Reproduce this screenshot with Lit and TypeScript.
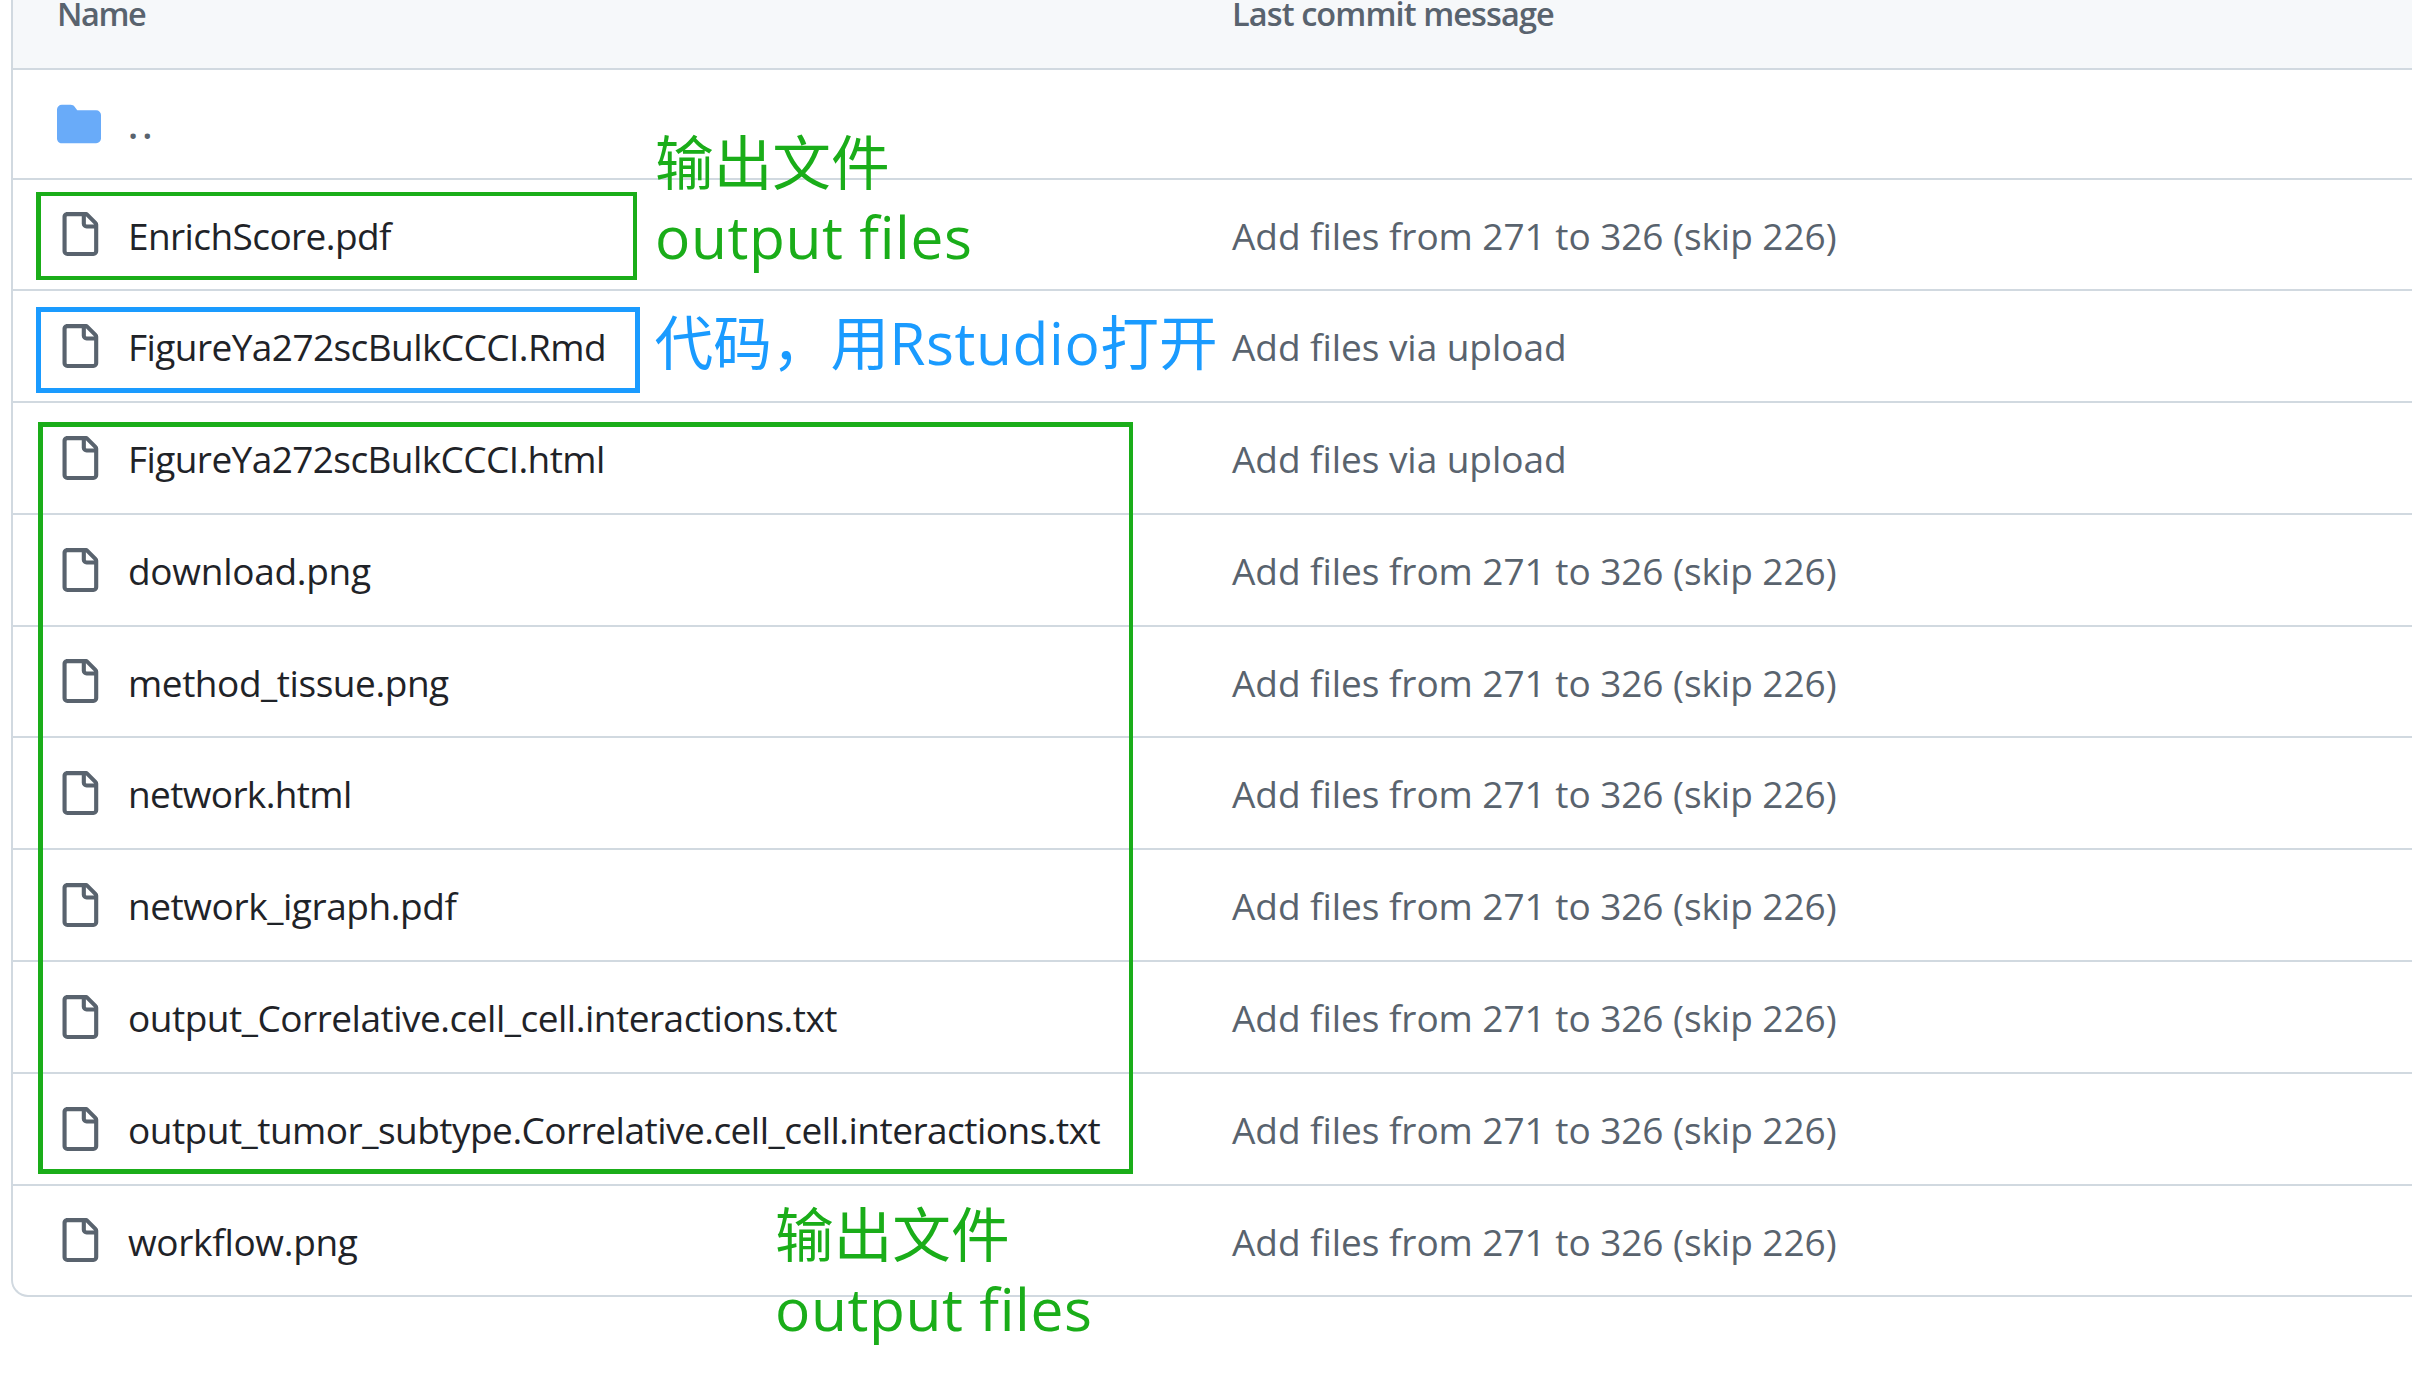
import { LitElement, html, css, svg } from "lit";
import { customElement } from "lit/decorators.js";
import { styleMap } from "lit/directives/style-map.js";

interface Entry {
  name: string;
  message: string;
  height: number;
  tracking: number;
}

const RANGE = "Add files from 271 to 326 (skip 226)";
const UPLOAD = "Add files via upload";

const ENTRIES: Entry[] = [
  { name: "EnrichScore.pdf", message: RANGE, height: 111, tracking: -0.59 },
  { name: "FigureYa272scBulkCCCI.Rmd", message: UPLOAD, height: 112, tracking: -0.57 },
  { name: "FigureYa272scBulkCCCI.html", message: UPLOAD, height: 112, tracking: -0.59 },
  { name: "download.png", message: RANGE, height: 112, tracking: -0.28 },
  { name: "method_tissue.png", message: RANGE, height: 111, tracking: -0.45 },
  { name: "network.html", message: RANGE, height: 112, tracking: -0.64 },
  { name: "network_igraph.pdf", message: RANGE, height: 112, tracking: -0.43 },
  { name: "output_Correlative.cell_cell.interactions.txt", message: RANGE, height: 112, tracking: -0.49 },
  { name: "output_tumor_subtype.Correlative.cell_cell.interactions.txt", message: RANGE, height: 112, tracking: -0.515 },
  { name: "workflow.png", message: RANGE, height: 111, tracking: -0.31 },
];

const fileIcon = svg`<path d="M2 1.75C2 .784 2.784 0 3.75 0h6.586c.464 0 .909.184 1.237.513l2.914 2.914c.329.328.513.773.513 1.237v9.586A1.75 1.75 0 0 1 13.25 16h-9.5A1.75 1.75 0 0 1 2 14.25Zm1.75-.25a.25.25 0 0 0-.25.25v12.5c0 .138.112.25.25.25h9.5a.25.25 0 0 0 .25-.25V6h-2.75A1.75 1.75 0 0 1 9 4.25V1.5Zm6.75.062V4.25c0 .138.112.25.25.25h2.688l-.011-.013-2.914-2.914-.013-.011Z"/>`;
const folderIcon = svg`<path d="M1.75 1A1.75 1.75 0 0 0 0 2.75v10.5C0 14.216.784 15 1.75 15h12.5A1.75 1.75 0 0 0 16 13.25v-8.5A1.75 1.75 0 0 0 14.25 3H7.5a.25.25 0 0 1-.2-.1l-.9-1.2C6.07 1.26 5.55 1 5 1H1.75Z"/>`;

@customElement("app-root")
export class AppRoot extends LitElement {
  static styles = css`
    :host {
      display: block;
      position: relative;
      width: 100%;
      height: 1385px;
      overflow: hidden;
      background: #fff;
      color: #1f2328;
      font-family: "Open Sans", "Noto Sans CJK SC", sans-serif;
      font-size: 37px;
      box-sizing: border-box;
      padding-left: 11px;
    }
    * { box-sizing: border-box; }
    .table {
      border-left: 2px solid #d1d9e0;
      border-bottom: 2px solid #d1d9e0;
      border-bottom-left-radius: 17px;
      height: 1297px;
      overflow: hidden;
    }
    .head, .row {
      display: grid;
      grid-template-columns: 1219px 1fr;
      align-items: center;
      white-space: pre;
    }
    .head {
      height: 68px;
      align-items: start;
      background: #f6f8fa;
      color: #59636e;
      font-size: 32.5px;
      line-height: 27px;
      font-weight: 600;
      letter-spacing: -0.9px;
    }
    .head span:first-child { padding-left: 44px; letter-spacing: -1.4px; }
    .row { border-top: 2px solid #d1d9e0; line-height: 58px; }
    .row span { padding-top: 2px; }
    .parent { height: 110px; }
    .name { display: flex; align-items: center; padding-left: 44px; }
    .icon { width: 44px; height: 44px; margin-right: 27px; margin-bottom: 1px; fill: #59636e; flex: none; }
    .folder { fill: #69abf9; }
    .message, .dots { color: #59636e; }
    .message { letter-spacing: -0.05px; }
    .dots { letter-spacing: 4.2px; font-weight: 600; }
    .box { position: absolute; border: 4px solid #1aad19; }
    .box-score { left: 36px; top: 192px; width: 601px; height: 88px; border-left-width: 5px; }
    .box-code { left: 36px; top: 307px; width: 604px; height: 86px; border: 5px solid #1a9bff; }
    .box-output { left: 38px; top: 422px; width: 1095px; height: 752px; border-width: 5px 4px 5px 5px; }
    .note { position: absolute; font-size: 58.67px; line-height: 74px; white-space: pre; color: #1aad19; }
    .note-top { left: 655px; top: 125px; }
    .note-code { left: 654.5px; top: 305px; color: #1a9bff; }
    .note-bottom { left: 775px; top: 1197px; }
    .latin { letter-spacing: 0.6px; }
  `;

  private icon(shape: unknown, kind: string) {
    return html`<svg class="icon ${kind}" viewBox="0 0 16 16" aria-hidden="true">${shape}</svg>`;
  }

  render() {
    return html`
      <div class="table">
        <div class="head"><span>Name</span><span>Last commit message</span></div>
        <div class="row parent">
          <div class="name">${this.icon(folderIcon, "folder")}<span class="dots">..</span></div>
        </div>
        ${ENTRIES.map(
          (e) => html`<div class="row" style=${styleMap({ height: `${e.height}px` })}>
            <div class="name">
              ${this.icon(fileIcon, "file")}<span style=${styleMap({ letterSpacing: `${e.tracking}px` })}>${e.name}</span>
            </div>
            <span class="message">${e.message}</span>
          </div>`
        )}
      </div>
      <div class="box box-score"></div>
      <div class="box box-code"></div>
      <div class="box box-output"></div>
      <div class="note note-top"><div>输出文件</div><div class="latin">output files</div></div>
      <div class="note note-code">代码，用<span class="latin">Rstudio</span>打开</div>
      <div class="note note-bottom"><div>输出文件</div><div class="latin">output files</div></div>
    `;
  }
}
